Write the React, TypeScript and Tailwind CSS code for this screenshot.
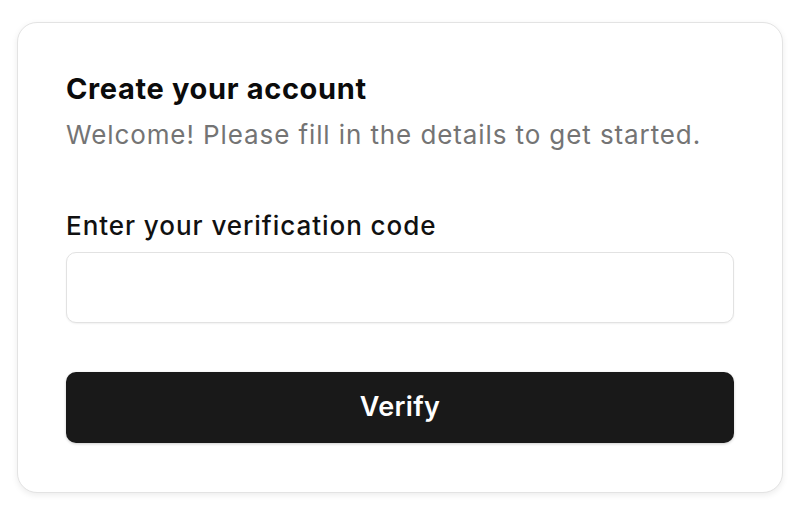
export default function App() {
  return (
    <div
      className="min-h-screen bg-white px-[17px] pt-[22px]"
      style={{ fontFamily: 'Inter, "Noto Sans", sans-serif' }}
    >
      <div className="w-[766px] h-[471px] rounded-[20px] border border-[#e3e3e3] bg-white px-[48px] pt-[46px] shadow-[0_2px_6px_rgba(0,0,0,0.08)]">
        <h1 className="text-[29px] leading-[40px] font-bold text-[#0b0b0b] tracking-[0.65px]">Create your account</h1>
        <p className="mt-[8px] text-[26px] leading-[36px] text-[#747474] tracking-[0.9px]">
          Welcome! Please fill in the details to get started.
        </p>

        <label className="mt-[55px] block text-[26px] leading-[36px] font-medium text-[#111111] tracking-[0.95px]">
          Enter your verification code
        </label>
        <input
          type="text"
          className="mt-[8px] block w-full h-[71px] rounded-[10px] border border-[#e2e2e2] bg-white px-4 outline-none shadow-[0_1px_2px_rgba(0,0,0,0.06)]"
        />

        <button className="mt-[49px] w-full h-[71px] rounded-[10px] bg-[#191919] text-white text-[27px] font-semibold tracking-[0.3px] shadow-[0_1px_3px_rgba(0,0,0,0.2)]">
          Verify
        </button>
      </div>
    </div>
  );
}
